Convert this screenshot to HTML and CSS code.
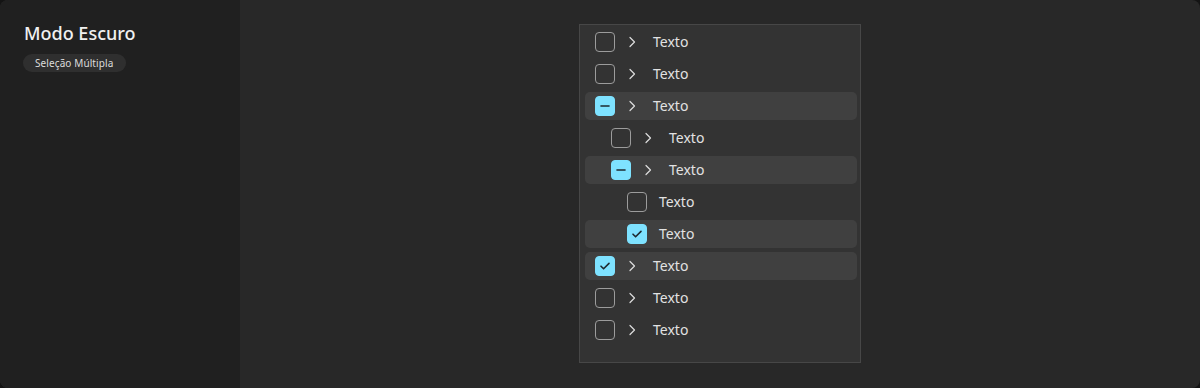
FILE: index.html
```html
<!DOCTYPE html>
<html lang="pt-BR">
<head>
  <meta charset="UTF-8" />
  <title>Modo Escuro</title>
  <link rel="stylesheet" href="styles.css">
</head>
<body>
  <div class="frame">
    <aside class="sidebar">
      <h1>Modo Escuro</h1>
      <span class="badge">Seleção Múltipla</span>
    </aside>

    <main class="main">
      <div class="tree">
        <div class="row">
          <span class="box"></span>
          <svg class="chev" viewBox="0 0 16 16"><path d="M6 3.5l4.5 4.5-4.5 4.5"/></svg>
          <span class="label">Texto</span>
        </div>
        <div class="row">
          <span class="box"></span>
          <svg class="chev" viewBox="0 0 16 16"><path d="M6 3.5l4.5 4.5-4.5 4.5"/></svg>
          <span class="label">Texto</span>
        </div>
        <div class="row active">
          <span class="box on"><svg viewBox="0 0 20 20"><path d="M6 10h8"/></svg></span>
          <svg class="chev" viewBox="0 0 16 16"><path d="M6 3.5l4.5 4.5-4.5 4.5"/></svg>
          <span class="label">Texto</span>
        </div>
        <div class="row lvl2">
          <span class="box"></span>
          <svg class="chev" viewBox="0 0 16 16"><path d="M6 3.5l4.5 4.5-4.5 4.5"/></svg>
          <span class="label">Texto</span>
        </div>
        <div class="row lvl2 active">
          <span class="box on"><svg viewBox="0 0 20 20"><path d="M6 10h8"/></svg></span>
          <svg class="chev" viewBox="0 0 16 16"><path d="M6 3.5l4.5 4.5-4.5 4.5"/></svg>
          <span class="label">Texto</span>
        </div>
        <div class="row lvl3 leaf">
          <span class="box"></span>
          <span class="label">Texto</span>
        </div>
        <div class="row lvl3 leaf active">
          <span class="box on"><svg viewBox="0 0 20 20"><path d="M6 10.2l2.6 2.6 5.4-5.4"/></svg></span>
          <span class="label">Texto</span>
        </div>
        <div class="row active">
          <span class="box on"><svg viewBox="0 0 20 20"><path d="M6 10.2l2.6 2.6 5.4-5.4"/></svg></span>
          <svg class="chev" viewBox="0 0 16 16"><path d="M6 3.5l4.5 4.5-4.5 4.5"/></svg>
          <span class="label">Texto</span>
        </div>
        <div class="row">
          <span class="box"></span>
          <svg class="chev" viewBox="0 0 16 16"><path d="M6 3.5l4.5 4.5-4.5 4.5"/></svg>
          <span class="label">Texto</span>
        </div>
        <div class="row">
          <span class="box"></span>
          <svg class="chev" viewBox="0 0 16 16"><path d="M6 3.5l4.5 4.5-4.5 4.5"/></svg>
          <span class="label">Texto</span>
        </div>
      </div>
    </main>
  </div>
</body>
</html>
```

FILE: styles.css
```css
* {
  box-sizing: border-box;
}
body {
  margin: 0;
  background: #141414;
  font-family: 'Noto Sans', sans-serif;
  color: #e8e8e8;
}
.frame {
  display: flex;
  width: 1200px;
  height: 388px;
  border-radius: 8px;
  overflow: hidden;
  background: #282828;
}
.sidebar {
  width: 240px;
  background: #202020;
  padding: 20px 23px;
}
.sidebar h1 {
  margin: 0 0 0 1px;
  font-size: 18px;
  font-weight: 500;
  line-height: 26px;
  color: #f0f0f0;
}
.badge {
  display: inline-block;
  margin-top: 8px;
  height: 18px;
  line-height: 18px;
  padding: 0 13px 0 12px;
  border-radius: 9px;
  background: #2f2f2f;
  font-size: 10px;
  letter-spacing: 0.1px;
  color: #dcdcdc;
}
.main {
  flex: 1;
  display: flex;
  justify-content: center;
  padding-top: 24px;
}
.tree {
  width: 282px;
  height: 339px;
  background: #333333;
  border: 1px solid #474747;
  padding: 3px 3px 0 5px;
  display: flex;
  flex-direction: column;
  gap: 4px;
}
.row {
  height: 28px;
  display: flex;
  align-items: center;
  padding-left: 10px;
  border-radius: 5px;
}
.row.active {
  background: #404040;
}
.row.lvl2 {
  padding-left: 26px;
}
.row.lvl3 {
  padding-left: 42px;
}
.box {
  width: 20px;
  height: 20px;
  border: 1.5px solid #9c9c9c;
  border-radius: 4px;
  flex-shrink: 0;
}
.box.on {
  background: #7ee2ff;
  border-color: #7ee2ff;
}
.box svg {
  display: block;
  width: 20px;
  height: 20px;
  margin: -1.5px;
  fill: none;
  stroke: #1e2a30;
  stroke-width: 1.6;
  stroke-linecap: round;
  stroke-linejoin: round;
}
.chev {
  width: 16px;
  height: 16px;
  margin-left: 9px;
  fill: none;
  stroke: #dddddd;
  stroke-width: 1.2;
  stroke-linecap: round;
  stroke-linejoin: round;
}
.label {
  margin-left: 13px;
  padding-bottom: 2px;
  font-size: 14px;
  color: #e2e2e2;
}
.leaf .label {
  margin-left: 12px;
}
```
